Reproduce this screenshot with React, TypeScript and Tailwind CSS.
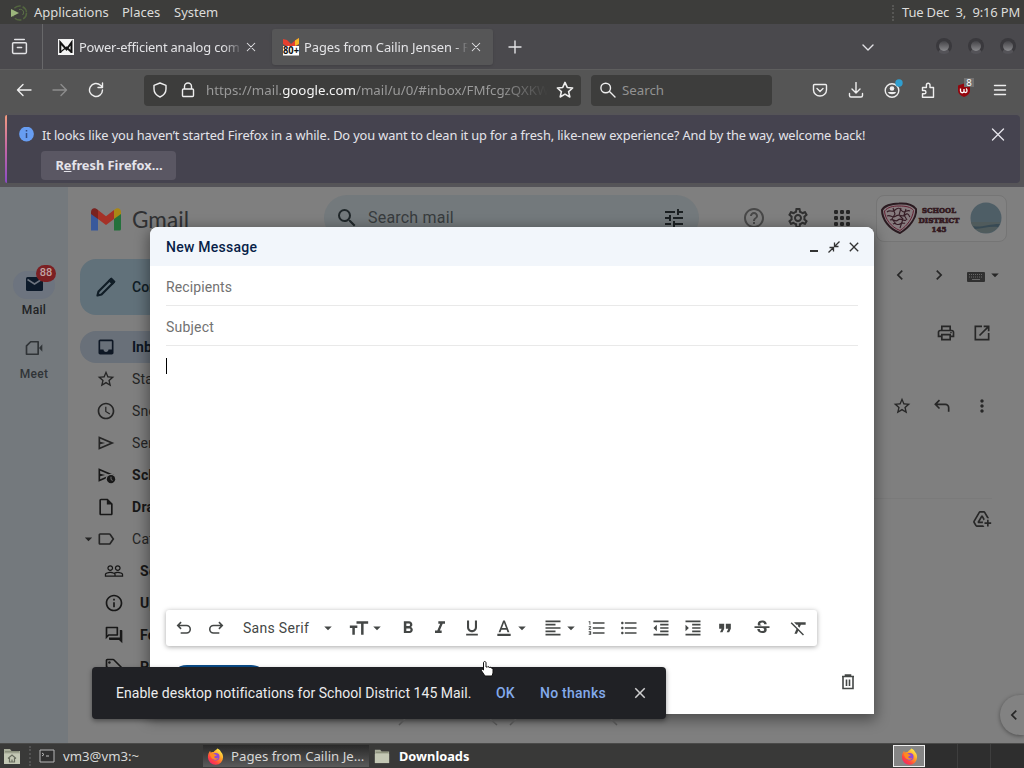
import React from "react";
import {
  MdAddToDrive, MdArrowDropDown, MdChevronLeft, MdChevronRight, MdClose,
  MdFormatAlignLeft, MdFormatBold, MdFormatClear, MdFormatIndentDecrease,
  MdFormatIndentIncrease, MdFormatItalic, MdFormatListBulleted, MdFormatListNumbered,
  MdFormatQuote, MdFormatUnderlined, MdHelpOutline, MdInbox,
  MdInfoOutline, MdMoreVert, MdOutlineForum, MdOutlineInsertDriveFile, MdOutlineLabel,
  MdOutlineLocalOffer, MdOutlinePrint, MdOutlineSchedule, MdOutlineSettings,
  MdPeopleOutline, MdSearch, MdStarBorder, MdStrikethroughS, MdTune,
} from "react-icons/md";

type SvgProps = { className?: string; children: React.ReactNode; box?: string };
const Line = ({ className = "w-4 h-4", children, box = "0 0 16 16" }: SvgProps) => (
  <svg viewBox={box} className={`shrink-0 ${className}`} fill="none" stroke="currentColor" strokeWidth="1.4" strokeLinecap="round" strokeLinejoin="round">
    {children}
  </svg>
);

const Cross = ({ className }: { className: string }) => (
  <Line className={className}><path d="M3 3l10 10M13 3L3 13" /></Line>
);

const Firefox = ({ className }: { className: string }) => (
  <svg viewBox="0 0 18 18" className={`shrink-0 ${className}`}>
    <defs>
      <linearGradient id="ff" x1="0.85" y1="0.1" x2="0.2" y2="0.95">
        <stop offset="0" stopColor="#fff04a" />
        <stop offset="0.4" stopColor="#ff9a26" />
        <stop offset="0.75" stopColor="#ff4540" />
        <stop offset="1" stopColor="#f0256a" />
      </linearGradient>
    </defs>
    <path d="M11 0.5c3 1.3 3.400 3 4 4 1 1 2 2.600 2 5A8 8 0 0 1 1 10C0.800 7 2 4.500 3.300 3l0.500 1.800C5 4 6 4 7 4.300 8 2.500 10 2 11 0.500z" fill="url(#ff)" />
    <circle cx="9.300" cy="9.300" r="4" fill="#8f49d6" />
    <path d="M3 6c2-1 4-0.500 5.500 0.800L10.500 7.500C9.500 9 8 8.500 7.500 9.500 8 11 10 11.500 12 10.500 10 14 4 12.500 3 6z" fill="#ff8a20" />
  </svg>
);

const Folder = ({ className, home = false }: { className: string; home?: boolean }) => (
  <svg viewBox="0 0 18 18" className={`shrink-0 ${className}`}>
    <path d="M1 2h6l1.500 2H17v13H1z" fill="#a9ad9a" />
    <path d="M1 6.500h16V17H1z" fill="#c3c7b4" />
    <path d="M2 4.800h14" stroke="#7f836f" />
    {home && <path d="M5 11.500L9 8l4 3.500M6.500 11v4h5v-4M9 15v-2.500" fill="none" stroke="#686c5e" strokeWidth="1.200" />}
  </svg>
);

function Panel() {
  return (
    <div className="flex h-6 shrink-0 items-center bg-[#3d3d3b] pt-px text-[13px] text-[#dcdcda]">
      <svg viewBox="0 0 20 20" className="ml-2 h-5 w-5 shrink-0">
        <circle cx="11.500" cy="10" r="7" fill="none" stroke="#53663f" strokeWidth="1.500" strokeDasharray="7 2" />
        <path d="M3 6l8 4-8 4z" fill="#9cb67c" />
        <path d="M11 6.500c4-1 6 3 3.500 5.500" fill="none" stroke="#5d7348" />
      </svg>
      <span className="ml-[6px] w-[88px]">Applications</span>
      <span className="w-[52px]">Places</span>
      <span>System</span>
      <span className="ml-auto mr-2 h-4 border-l-2 border-dotted border-[#575755]" />
      <span className="w-[122px] whitespace-pre tracking-[-0.180px]">Tue Dec  3,  9:16 PM</span>
    </div>
  );
}

function Tabs() {
  return (
    <div className="flex h-[46px] shrink-0 items-center border-b border-[#5e5e5e] bg-[#4a494d] text-[12.900px] text-[#e3e3e6]">
      <div className="flex h-full w-[43px] items-center justify-center border-r border-[#68686a] pr-[3px]">
        <Line className="h-[17px] w-[17px]"><path d="M3.500 1.500h9M2.500 4.500h11a1 1 0 0 1 1 1v8a1 1 0 0 1-1 1h-11a1 1 0 0 1-1-1v-8a1 1 0 0 1 1-1zM6 9h4" /></Line>
      </div>
      <div className="flex w-[229px] items-center pt-px">
        <svg viewBox="0 0 16 16" className="ml-[15px] h-4 w-4 shrink-0">
          <path d="M0 0h16v16H0z" fill="#f4f4f4" />
          <path d="M2.300 14V3.500L8.500 10.500l5-7V14M8 8l5.500 5" fill="none" stroke="#111" strokeWidth="2" />
          <path d="M2.500 13L7.500 9" fill="none" stroke="#111" strokeWidth="1.300" />
        </svg>
        <span className="ml-[5px] w-[164px] overflow-hidden whitespace-nowrap pt-[2px] tracking-[-0.180px] [mask-image:linear-gradient(to_right,black_88%,transparent)]">Power-efficient analog com</span>
        <Cross className="ml-0.5 h-3 w-3" />
      </div>
      <div className="flex h-9 w-[221px] items-center rounded-[3px] bg-[#565657] pt-px shadow-sm">
        <svg viewBox="0 0 18 18" className="ml-[10px] h-[18px] w-[18px] shrink-0">
          <path d="M1 1l4 1 4 4 4-3.500L17 0v6l-8 5-8-5z" fill="#e5402f" />
          <path d="M13 2.500L17 0v6l-4 2z" fill="#f4b928" />
          <path d="M1 8h16v9.500H1z" fill="#fff" />
          <text x="9" y="16.300" textAnchor="middle" fontSize="10" fontWeight="bold" fill="#111" textLength="16" lengthAdjust="spacingAndGlyphs">80+</text>
        </svg>
        <span className="ml-1 w-[164px] overflow-hidden whitespace-nowrap pt-[2px] tracking-[-0.060px] [mask-image:linear-gradient(to_right,black_92%,transparent)]">Pages from Cailin Jensen - Re</span>
        <Cross className="ml-0.5 h-3 w-3" />
      </div>
      <Line className="ml-[14px] h-4 w-4"><path d="M8 2v12M2 8h12" /></Line>
      <Line className="ml-[337px] h-4 w-4"><path d="M3 6l5 5 5-5" /></Line>
      <div className="ml-auto flex gap-4 pb-px pr-2">
        {[0, 1, 2].map((i) => (
          <span key={i} className="h-4 w-4 rounded-full border-[3px] border-[#3a393d] border-b-[#545358] bg-gradient-to-b from-[#454448] to-[#8a8a8d]" />
        ))}
      </div>
    </div>
  );
}

function Toolbar() {
  return (
    <div className="flex h-[43px] shrink-0 items-center bg-[#555555] pb-[3px] text-[13.300px] text-[#eeeeee]">
      <Line className="ml-4 h-4 w-4"><path d="M15 8H1.500M7 2.500L1.500 8 7 13.500" /></Line>
      <Line className="ml-5 h-4 w-4 text-[#8d8d8d]"><path d="M1 8h13.500M9 2.500L14.500 8 9 13.500" /></Line>
      <Line className="ml-5 h-4 w-4"><path d="M14.500 8a6.500 6.500 0 1 1-2-4.700L14.500 5M14.500 1v4.500H10" /></Line>
      <div className="ml-[40px] flex h-[31px] w-[437px] items-center rounded-[4px] bg-[#3d3d3c]">
        <Line className="ml-2 h-4 w-4"><path d="M8 1l6 2.300V7c0 4-2.500 6.500-6 8-3.500-1.500-6-4-6-8V3.300z" /></Line>
        <Line className="ml-3 h-4 w-4"><path d="M3.500 7h9a1 1 0 0 1 1 1v5.500a1 1 0 0 1-1 1h-9a1 1 0 0 1-1-1V8a1 1 0 0 1 1-1zM4.500 7V4.500a3.500 3.500 0 0 1 7 0V7" /></Line>
        <span className="ml-[10px] w-[342px] overflow-hidden whitespace-nowrap pt-px text-[#9a9a9a] [mask-image:linear-gradient(to_right,black_86%,transparent)]">
          https://mail.<span className="text-[#f4f4f4]">google.com</span>/mail/u/0/#inbox/FMfcgzQXKWx
        </span>
        <Line className="ml-[8px] h-[18px] w-[18px]"><path d="M8 1.200l2 4.500 4.800 0.500-3.600 3.200 1.100 4.800L8 11.700l-4.300 2.500 1.100-4.800L1.200 6.200 6 5.700z" /></Line>
      </div>
      <div className="ml-[10px] flex h-[31px] w-[181px] items-center rounded-[4px] bg-[#3d3d3c]">
        <Line className="ml-[9px] h-4 w-4"><path d="M10.500 6a4.800 4.800 0 1 1-9.600 0 4.800 4.800 0 0 1 9.600 0zM9.500 9.500L15 15" /></Line>
        <span className="ml-[6px] pt-px text-[#929292]">Search</span>
      </div>
      <div className="ml-auto flex items-center gap-5 pr-4">
        <Line><path d="M2.500 2.500h11a1 1 0 0 1 1 1V8A6.500 6 0 0 1 1.500 8V3.500a1 1 0 0 1 1-1zM5 6.500l3 3 3-3" /></Line>
        <Line><path d="M8 0.500v10M4 7l4 4 4-4M1.500 11.500v2a1.500 1.500 0 0 0 1.500 1.500h10a1.500 1.500 0 0 0 1.500-1.500v-2" /></Line>
        <Line className="h-4 w-4 overflow-visible">
          <circle cx="8" cy="8.500" r="6.800" />
          <circle cx="8" cy="6.500" r="2.300" fill="currentColor" stroke="none" />
          <path d="M4 10h8c-0.500 3-7.500 3-8 0z" fill="currentColor" stroke="none" />
          <circle cx="15" cy="1" r="3.700" fill="#2f9fd0" stroke="none" />
        </Line>
        <Line><path d="M2.500 15.300h11V5.500H10V3a1.800 1.800 0 0 0-3.600 0v2.500H2.500v3h1.800a1.500 1.500 0 0 1 0 3.300H2.500z" /></Line>
        <svg viewBox="0 0 16 16" className="h-4 w-4 overflow-visible">
          <path d="M8 1.500l6 2v5c0 3-2 5-6 6.500-4-1.500-6-3.500-6-6.500v-5z" fill="#94050d" />
          <path d="M4.500 6.500v2.500a1.500 1.500 0 0 0 3.500 0V7v2a1.500 1.500 0 0 0 3 0c0-1 0-2-1-2.500" fill="none" stroke="#fff" strokeWidth="1.300" />
          <path d="M8-4h10v9H8z" fill="#717171" />
          <text x="13" y="3.500" fontSize="9.500" fill="#fff" textAnchor="middle">8</text>
        </svg>
        <Line><path d="M2.500 3.500h11M2.500 8h11M2.500 12.500h11" /></Line>
      </div>
    </div>
  );
}

function Notice() {
  return (
    <div className="h-[74px] shrink-0 border-b-2 border-[#555459] bg-[#555457] pl-[5px] pr-[4px] pt-[2px]">
      <div className="flex h-[68px] rounded-[4px] bg-[#45434f] text-[12.800px] text-[#e4e3ea]">
        <span className="w-[2px] shrink-0 rounded-l bg-gradient-to-b from-[#f29a7b] via-[#c466a6] to-[#8c4bc4]" />
        <div className="flex flex-1 flex-col">
          <div className="flex h-[36px] items-center pt-1">
            <svg viewBox="0 0 16 16" className="ml-[12px] h-4 w-4 shrink-0"><circle cx="7.500" cy="7" r="7.400" fill="#679df2" /><path d="M7.500 6v5M7.500 3v1.500" stroke="#334c82" strokeWidth="1.500" /></svg>
            <span className="ml-[7px] whitespace-nowrap pt-[2px] tracking-[-0.120px]">It looks like you haven’t started Firefox in a while. Do you want to clean it up for a fresh, like-new experience? And by the way, welcome back!</span>
            <Line className="ml-auto mr-[14px] h-4 w-4"><path d="M2.500 2l11 11M13.500 2l-11 11" /></Line>
          </div>
          <div className="ml-[34px] flex h-[29px] w-[135px] items-center justify-center rounded-[4px] bg-[#5a5763] pl-px font-bold">
            <span>R<span className="underline">e</span>fresh Firefox…</span>
          </div>
        </div>
      </div>
    </div>
  );
}

const SendOutline = ({ clock = false }: { clock?: boolean }) => (
  <svg viewBox="0 0 24 24" className="h-5 w-5 shrink-0" fill="currentColor">
    <path d="M3 20V4l19 8zM5 17l11.800-5L5 7v3.500l6 1.500-6 1.500z" fillRule="evenodd" />
    {clock && <><circle cx="18" cy="17" r="6.500" fill="#7f7f7f" /><circle cx="18" cy="17" r="5" /><path d="M18 14v3.500l2 1" stroke="#7f7f7f" fill="none" /></>}
  </svg>
);

const ICON = "h-5 w-5 shrink-0";
const folders = [
  { label: "Starred", icon: <MdStarBorder className={ICON} />, bold: false },
  { label: "Snoozed", icon: <MdOutlineSchedule className={ICON} />, bold: false },
  { label: "Sent", icon: <SendOutline />, bold: false },
  { label: "Scheduled", icon: <SendOutline clock />, bold: true },
  { label: "Drafts", icon: <MdOutlineInsertDriveFile className={ICON} />, bold: true },
];
const categories = [
  { label: "Social", icon: <MdPeopleOutline className={ICON} /> },
  { label: "Updates", icon: <MdInfoOutline className={ICON} /> },
  { label: "Forums", icon: <MdOutlineForum className={ICON} /> },
  { label: "Promotions", icon: <MdOutlineLocalOffer className={ICON} /> },
];

function Rail() {
  return (
    <div className="flex w-[68px] shrink-0 flex-col items-center bg-[#74797d] pt-[84px] text-[12px] font-medium tracking-[0.3px] text-[#202224]">
      <div className="relative flex h-7 w-[42px] items-center justify-center rounded-full bg-[#6d747f] text-[#0d1a2a]">
        <svg viewBox="0 0 17 14" className="h-[14px] w-[17px] -translate-y-px"><rect width="17" height="14" rx="1.500" fill="currentColor" /><path d="M1.500 2.500l7 4.500 7-4.500" stroke="#6d747f" strokeWidth="1.500" fill="none" /></svg>
        <span className="absolute -top-[6px] left-[23px] flex h-[17px] w-[20px] items-center justify-center rounded-full bg-[#7c2023] text-[11px] tracking-normal text-[#bfa4a4]">88</span>
      </div>
      <span className="mt-[3px] leading-4">Mail</span>
      <svg viewBox="0 0 24 24" className="mt-[20px] h-5 w-5" fill="none" stroke="#303437" strokeWidth="2"><path d="M8 4.500h9v15H3V9.500z" strokeLinejoin="round" /><path d="M18 12l4-4.500v9z" fill="#303437" stroke="none" /></svg>
      <span className="mt-[8px] leading-4 text-[#303437]">Meet</span>
    </div>
  );
}

function Sidebar() {
  return (
    <div className="flex w-[180px] shrink-0 flex-col overflow-hidden text-[14px] text-[#252525]">
      <div className="flex h-[72px] items-center pl-[23px]">
        <svg viewBox="0 0 30 23" className="mt-[-8px] h-[23px] w-[30px] shrink-0">
          <path d="M0 4v18.500h7V9z" fill="#38599c" />
          <path d="M23 9v13.500h5.500A1.500 1.500 0 0 0 30 21V4z" fill="#24713b" />
          <path d="M7 2l8 6.200L23 2v9l-8 6-8-6z" fill="#a53127" />
          <path d="M0 4c0-4 4-5 7-2v9L0 6z" fill="#792220" />
          <path d="M23 2c3-3 7-2 7 2v2l-7 5z" fill="#a98716" />
        </svg>
        <span className="ml-[11px] mt-[-7px] text-[22.500px] tracking-[0.1px] text-[#303133] [font-family:Lato,sans-serif]">Gmail</span>
      </div>
      <div className="ml-[12px] flex h-[56px] w-[160px] shrink-0 items-center rounded-[16px] bg-[#61717a] pl-[14px] font-medium text-[#101d26]">
        <svg viewBox="0 0 24 24" className="h-6 w-6 shrink-0"><path d="M4.500 16.500L17 4l3 3L7.500 19.500l-4 1z" fill="none" stroke="currentColor" strokeWidth="2.200" strokeLinejoin="round" /><path d="M14 5.500L17.500 2.500 21.500 6.500 18.500 10z" fill="currentColor" /></svg>
        <span className="ml-[14px]">Compose</span>
      </div>
      <div className="ml-[12px] mt-[16px] flex h-8 shrink-0 items-center rounded-full bg-[#697079] pl-4 font-bold text-[#0e1724]">
        <MdInbox className={ICON} /><span className="ml-4">Inbox</span>
      </div>
      {folders.map((f) => (
        <div key={f.label} className={`flex h-8 shrink-0 items-center pl-[28px] ${f.bold ? "font-bold tracking-[0.3px] text-[#181818]" : "tracking-[0.2px]"}`}>
          {f.icon}<span className="ml-4">{f.label}</span>
        </div>
      ))}
      <div className="flex h-8 shrink-0 items-center pl-[12px]">
        <MdArrowDropDown className="mr-[-1px] h-4 w-[17px] scale-110" /><MdOutlineLabel className={ICON} /><span className="ml-4 tracking-[0.3px]">Categories</span>
      </div>
      {categories.map((f) => (
        <div key={f.label} className="flex h-8 shrink-0 items-center pl-9 font-bold tracking-[0.3px] text-[#181818]">
          {f.icon}<span className="ml-4">{f.label}</span>
        </div>
      ))}
    </div>
  );
}

const dots = [3, 9, 15];

function Mailbox() {
  return (
    <div className="flex min-w-0 flex-1 flex-col text-[#272727]">
      <div className="flex h-[64px] shrink-0 items-center pb-[2px]">
        <div className="ml-[76px] flex h-[46px] w-[375px] items-center rounded-full bg-[#73797c] pl-[11px] pr-[13px]">
          <MdSearch className="h-6 w-6 text-[#20272a]" />
          <span className="ml-[9px] text-[16px] tracking-[0.2px] text-[#383c3e]">Search mail</span>
          <MdTune className="ml-auto h-6 w-6 text-[#1b2022]" />
        </div>
        <MdHelpOutline className="ml-[43px] h-6 w-6 text-[#484848]" />
        <MdOutlineSettings className="ml-5 h-6 w-6 text-[#303030]" />
        <svg viewBox="0 0 18 18" className="ml-[23px] mr-[3px] h-[18px] w-[18px]" fill="currentColor">
          {dots.map((y) => dots.map((x) => <rect key={`${x}-${y}`} x={x - 2} y={y - 2} width="4" height="4" rx="1.200" />))}
        </svg>
        <div className="ml-[22px] flex h-[47px] w-[131px] items-center rounded-[8px] border border-[#757575] bg-[#828282] pl-[4px]">
          <svg viewBox="0 0 36 32" className="h-8 w-[36px] shrink-0" fill="none">
            <path d="M18 1.500C26 1 32 3 35 7c1 8-6 18-16 24C8 27 1 17 1 8 3 4 10 1.500 18 1.500z" fill="#867b7e" stroke="#2a1a20" strokeWidth="2" />
            <path d="M18 4c7 0 12 1 14.500 4.500-1 8-6 15-13.500 20C10 25 4 17 3.500 9 7 5 12 4 18 4z" stroke="#622032" />
            <path d="M6 10c3-3 5 1 8-2s5-2 7 1 5-2 8 0M6 14c4-2 5 3 9 0s6 2 9-1 4 1 5 2M9 18c4-2 5 3 8 0s5 2 8 0M12 22c2-2 4 2 7 0s3 0 5-1M12 6l2 6-3 5 4 5M20 6l-2 7 4 4-3 9M25 7l-2 6 3 5" stroke="#351c25" strokeWidth="1.100" />
          </svg>
          <svg viewBox="0 0 44 32" className="h-8 w-[44px] shrink-0" fill="#33191f" stroke="#33191f" strokeWidth="0.700" fontFamily="'DejaVu Serif', serif" fontWeight="bold" fontSize="8" textAnchor="middle">
            <text x="22" y="11" textLength="34" lengthAdjust="spacingAndGlyphs">SCHOOL</text>
            <text x="22" y="20.500" textLength="41" lengthAdjust="spacingAndGlyphs">DISTRICT</text>
            <text x="22" y="30" textLength="15" lengthAdjust="spacingAndGlyphs">145</text>
          </svg>
          <svg viewBox="0 0 32 32" className="ml-[9px] h-8 w-8 shrink-0">
            <circle cx="16" cy="16" r="15.500" fill="#4e5e66" />
            <path d="M1 20h29c-1 5-5 10-14 11C8 31 2 26 1 20z" fill="#505b5c" />
            <path d="M3 24c8 2 15-2 27-2l-2 3c-9-1-16 2-23 2z" fill="#384a54" />
          </svg>
        </div>
      </div>
      <div className="flex h-12 items-center justify-end">
        <MdChevronLeft className="mr-[19px] h-5 w-5" />
        <MdChevronRight className="mr-[18px] h-5 w-5" />
        <svg viewBox="0 0 18 10" className="mt-[3px] h-[10px] w-[18px]"><rect width="18" height="10" rx="1" fill="#303030" /><path d="M2 2.500h14M2 5h14" stroke="#686868" strokeDasharray="1 1" /><path d="M5 7.500h8" stroke="#686868" /></svg>
        <MdArrowDropDown className="ml-px mr-[20px] h-[18px] w-[18px]" />
      </div>
      <div className="flex h-[68px] items-center justify-end gap-4 pr-8">
        <MdOutlinePrint className={ICON} />
        <svg viewBox="0 0 24 24" className={ICON} fill="none" stroke="currentColor" strokeWidth="2"><path d="M12 4H4v16h16v-8M14 4h6v6M20 4L9 15" /></svg>
      </div>
      <div className="flex h-[78px] items-center justify-end gap-5 pr-8">
        <MdStarBorder className={ICON} />
        <svg viewBox="0 0 24 24" className={ICON} fill="none" stroke="currentColor" strokeWidth="2"><path d="M9 5L4 10l5 5M4 10h12a4 4 0 0 1 4 4v5" /></svg>
        <MdMoreVert className={ICON} />
      </div>
      <div className="mr-[32px] mt-[53px] flex h-[40px] items-center justify-end border-t border-[#7a7a7a]">
        <MdAddToDrive className={ICON} />
      </div>
      <div className="mt-auto flex h-[52px] items-start justify-end">
        <div className="mt-[4px] flex h-10 w-6 items-center justify-center rounded-l-full bg-[#828282] pl-[3px] shadow-[0_1px_4px_rgba(0,0,0,0.4)]">
          <MdChevronLeft className="h-5 w-5" />
        </div>
      </div>
    </div>
  );
}

const F = "h-5 w-5 shrink-0";
const Caret = () => <MdArrowDropDown className="h-[18px] w-[18px] shrink-0" />;

function Compose() {
  return (
    <div className="absolute left-[150px] top-[227px] flex h-[487px] w-[724px] flex-col rounded-t-[8px] bg-white text-[14px] text-[#444746] shadow-[0_4px_14px_2px_rgba(0,0,0,0.4)]">
      <div className="flex h-[39px] shrink-0 items-center rounded-t-[8px] bg-[#f2f6fb] px-4 pt-px text-[#333]">
        <span className="font-medium tracking-[0.25px] text-[#081e48]">New Message</span>
        <span className="ml-auto mt-2 h-[2px] w-2 bg-[#333]" />
        <svg viewBox="0 0 12 12" className="ml-[10px] h-3 w-3" fill="none" stroke="currentColor" strokeWidth="1.300"><path d="M11.500 0.500L7 5M6.500 1.500v4h4M0.500 11.500L5 7M1.500 6.500h4v4" /></svg>
        <MdClose className="-mr-[4px] ml-[6px] h-4 w-4" />
      </div>
      <div className="mx-4 flex h-[40px] shrink-0 items-center border-b border-[#e9e9e9] pt-[3px] tracking-[0.1px] text-[#727272]">Recipients</div>
      <div className="mx-4 flex h-10 shrink-0 items-center border-b border-[#e9e9e9] pt-[3px] tracking-[0.2px] text-[#727272]">Subject</div>
      <div className="mx-4 flex-1 pt-[12px]"><div className="h-4 w-px bg-black" /></div>
      <div className="ml-4 flex h-[36px] w-[651px] shrink-0 items-center rounded-[3px] bg-white shadow-[0_1px_5px_rgba(0,0,0,0.35)]">
        <svg viewBox="0 0 24 24" className="ml-2 h-5 w-5" fill="none" stroke="currentColor" strokeWidth="1.900"><path d="M8.500 5L4.500 9l4 4M4.500 9H15a4.500 4.500 0 0 1 0 9H8" /></svg>
        <svg viewBox="0 0 24 24" className="ml-3 h-5 w-5" fill="none" stroke="currentColor" strokeWidth="1.900"><path d="M15.500 5l4 4-4 4M19.500 9H9a4.500 4.500 0 0 0 0 9h7" /></svg>
        <span className="ml-[17px] w-[76px] tracking-[0.3px]">Sans Serif</span><Caret />
        <svg viewBox="0 0 24 24" className="ml-[12px] h-5 w-5" fill="currentColor"><path d="M9 4h14v3h-5.500v13h-3V7H9zM1 9h9v3H7v8H4v-8H1z" /></svg>
        <span className="-ml-px"><Caret /></span>
        <div className="ml-3 flex gap-3"><MdFormatBold className={F} /><MdFormatItalic className={F} /><MdFormatUnderlined className={F} />
          <svg viewBox="0 0 24 24" className={F} fill="currentColor"><path d="M4 19h16v2.500H4zM11 3L5.500 17h2.300l1.100-3h6.200l1.100 3h2.300L13 3zm-1.400 9L12 5.700l2.400 6.300z" /></svg>
        </div>
        <span className="-ml-px"><Caret /></span>
        <MdFormatAlignLeft className="ml-[12px] h-5 w-5" /><span className="-ml-px"><Caret /></span>
        <div className="ml-[7px] flex gap-3"><MdFormatListNumbered className={F} /><MdFormatListBulleted className={F} /><MdFormatIndentDecrease className={F} /><MdFormatIndentIncrease className={F} /><MdFormatQuote className={F} /></div>
        <MdStrikethroughS className="ml-[17px] h-5 w-5" />
        <MdFormatClear className="ml-[17px] h-5 w-5" />
      </div>
      <div className="flex h-[68px] shrink-0 items-start pl-[19px] pr-4 pt-[19px]">
        <div className="h-9 w-[100px] rounded-full bg-[#0b4d8a]" />
        <svg viewBox="0 0 20 20" className="ml-auto mt-[7px] h-5 w-5" fill="none" stroke="currentColor" strokeWidth="1.600"><path d="M4 4.500h12M7.500 4V3h5v1M5 5v11.500h10V5M8.500 7.500v6.500M11.500 7.500v6.500" /></svg>
      </div>
    </div>
  );
}

function Toast() {
  return (
    <div className="absolute left-[92px] top-[667px] flex h-[52px] w-[574px] items-center rounded-[4px] bg-[#202125] pl-6 text-[14px] text-[#ececed] shadow-[0_2px_5px_rgba(0,0,0,0.4)]">
      <span className="w-[380px] whitespace-nowrap tracking-[0.045px]">Enable desktop notifications for School District 145 Mail.</span>
      <span className="w-[44px] font-medium text-[#83aaeb]">OK</span>
      <span className="w-[91px] font-medium tracking-[0.250px] text-[#83aaeb]">No thanks</span>
      <MdClose className="h-[18px] w-[18px] text-[#cfcfd0]" />
    </div>
  );
}

function Taskbar() {
  return (
    <div className="flex h-[25px] shrink-0 items-center border-t border-[#4a4a49] bg-[#393938] text-[13.200px] text-[#d8d8d7]">
      <Folder home className="ml-[3px] h-[18px] w-[18px]" />
      <span className="ml-[8px] h-5 border-l-2 border-dotted border-[#525252]" />
      <svg viewBox="0 0 16 14" className="ml-[8px] h-[14px] w-4"><path d="M1 1h14v12H1z" fill="#303030" stroke="#b6b6b6" /><path d="M3 4l2 1.500L3 7M7 7h3" stroke="#bdbdbd" fill="none" /></svg>
      <span className="ml-[8px] w-[140px] pt-px">vm3@vm3:~</span>
      <div className="flex h-[22px] w-[166px] items-center bg-gradient-to-b from-[#292929] to-[#5b5b5b]">
        <Firefox className="ml-1 h-[17px] w-[17px]" /><span className="ml-[7px] whitespace-nowrap pt-px">Pages from Cailin Je...</span>
      </div>
      <Folder className="ml-[5px] h-[16px] w-[16px]" /><span className="ml-[9px] pt-px text-[12.800px] font-bold text-white">Downloads</span>
      <div className="ml-auto flex h-[22px] w-[32px] items-center justify-center border border-[#eeeeee] bg-[#858585]"><Firefox className="h-[17px] w-[17px]" /></div>
      <div className="flex h-6 w-[99px] bg-[#2e2e2e]"><span className="w-[33px] border-r border-[#3e3e3e]" /><span className="w-[33px] border-r border-[#3e3e3e]" /></div>
    </div>
  );
}

export default function App() {
  return (
    <div className="relative flex h-[768px] w-[1024px] flex-col overflow-hidden [font-family:'Noto_Sans',sans-serif]">
      <Panel /><Tabs /><Toolbar /><Notice />
      <div className="flex min-h-0 flex-1 overflow-hidden bg-[#7f7f7f] [font-family:Roboto,sans-serif]">
        <Rail /><Sidebar /><Mailbox />
      </div>
      <Taskbar />
      <div className="[font-family:Roboto,sans-serif]"><Compose /><Toast /></div>
      <svg viewBox="0 0 224 8" className="absolute left-[398px] top-[719px] h-2 w-[224px]" fill="none" stroke="#505050" strokeWidth="1.500"><path d="M1 6l6-6M92 0l7 6M112 6l6-6M213 0l6 6" /></svg>
      <svg viewBox="0 0 14 18" className="absolute left-[480px] top-[660px] h-[18px] w-[14px]"><path d="M4.500 1.500c1 0 1.500 0.500 1.500 1.500v4h1.500l0.500-0.500 1.500 1 1.500-0.300 0.500 1 1.500 0.300V13l-1 3H5l-4-6c0.500-1 1.500-1 2.500 0V3c0-1 0.500-1.500 1-1.500z" fill="#fff" stroke="#111" /></svg>
    </div>
  );
}
